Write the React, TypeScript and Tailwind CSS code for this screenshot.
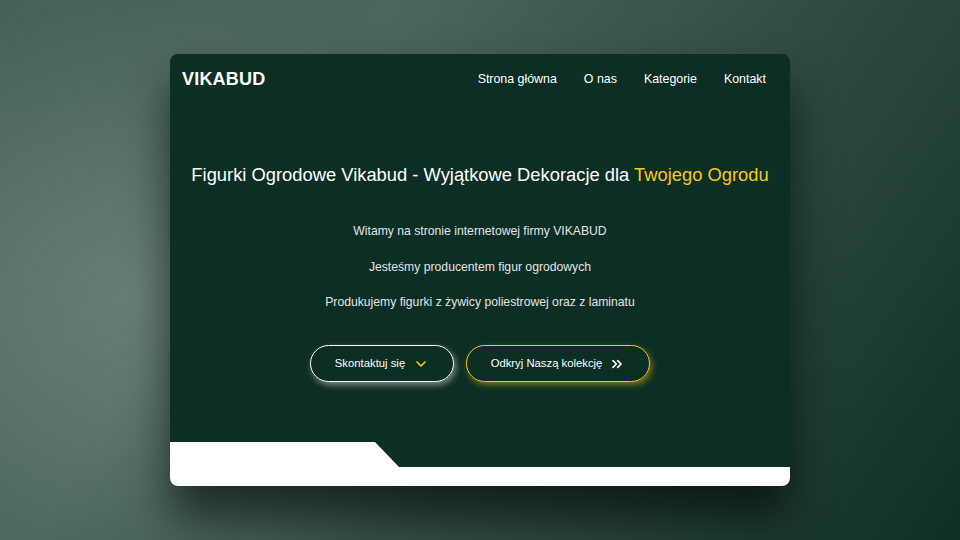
import React from "react";
import { ChevronDown, ChevronsRight } from "lucide-react";

const links = ["Strona główna", "O nas", "Kategorie", "Kontakt"];

const paragraphs = [
   "Witamy na stronie internetowej firmy VIKABUD",
   "Jesteśmy producentem figur ogrodowych",
   "Produkujemy figurki z żywicy poliestrowej oraz z laminatu",
];

function App() {
   return (
      <div className="w-full h-[540px] flex items-center justify-center font-['Liberation_Sans',Arial,sans-serif] bg-[radial-gradient(ellipse_40%_55%_at_15%_55%,rgba(140,160,150,0.45)_0%,rgba(140,160,150,0)_100%),linear-gradient(125deg,#456159_0%,#4a665e_30%,#2c4a41_65%,#0f2f26_100%)]">
         <div className="w-[620px] h-[432px] rounded-lg bg-[#0d2e25] flex flex-col overflow-hidden shadow-[0_30px_45px_rgba(0,0,0,0.6)]">
            <nav className="h-12 flex items-center justify-between pl-3 pr-6 pt-[2px]">
               <span className="text-white text-[18px] font-bold tracking-[0.2px]">VIKABUD</span>
               <ul className="flex items-center gap-[27px] text-white text-[12.4px]">
                  {links.map((l) => (
                     <li key={l}>{l}</li>
                  ))}
               </ul>
            </nav>

            <section className="flex-1 flex flex-col items-center">
               <h1 className="mt-[61px] text-[18.35px] leading-6 text-white">
                  Figurki Ogrodowe Vikabud - Wyjątkowe Dekoracje dla{" "}
                  <span className="text-[#f7cb15]">Twojego Ogrodu</span>
               </h1>

               <div className="mt-[34px] flex flex-col items-center gap-[15.5px] text-[12.2px] leading-5 text-[#e4e4e4]">
                  {paragraphs.map((p) => (
                     <p key={p}>{p}</p>
                  ))}
               </div>

               <div className="mt-[33px] flex gap-3">
                  <button className="h-[37px] w-[144px] rounded-full border-[1.5px] border-white text-white text-[11.3px] flex items-center justify-center gap-2 shadow-[2px_3px_6px_rgba(255,255,255,0.45)]">
                     <span>Skontaktuj się</span>
                     <ChevronDown className="w-4 h-4 text-[#f7cb15]" strokeWidth={2.5} />
                  </button>
                  <button className="h-[37px] w-[184px] rounded-full border-[1.5px] border-[#f7cb15] text-white text-[11.3px] flex items-center justify-center gap-[7px] shadow-[2px_3px_6px_rgba(247,203,21,0.45)]">
                     <span>Odkryj Naszą kolekcję</span>
                     <ChevronsRight className="w-4 h-4 text-white" strokeWidth={2.5} />
                  </button>
               </div>
            </section>

            <div className="h-[44px] bg-white [clip-path:polygon(0_0,205px_0,229px_25px,100%_25px,100%_100%,0_100%)]" />
         </div>
      </div>
   );
}

export default App;
